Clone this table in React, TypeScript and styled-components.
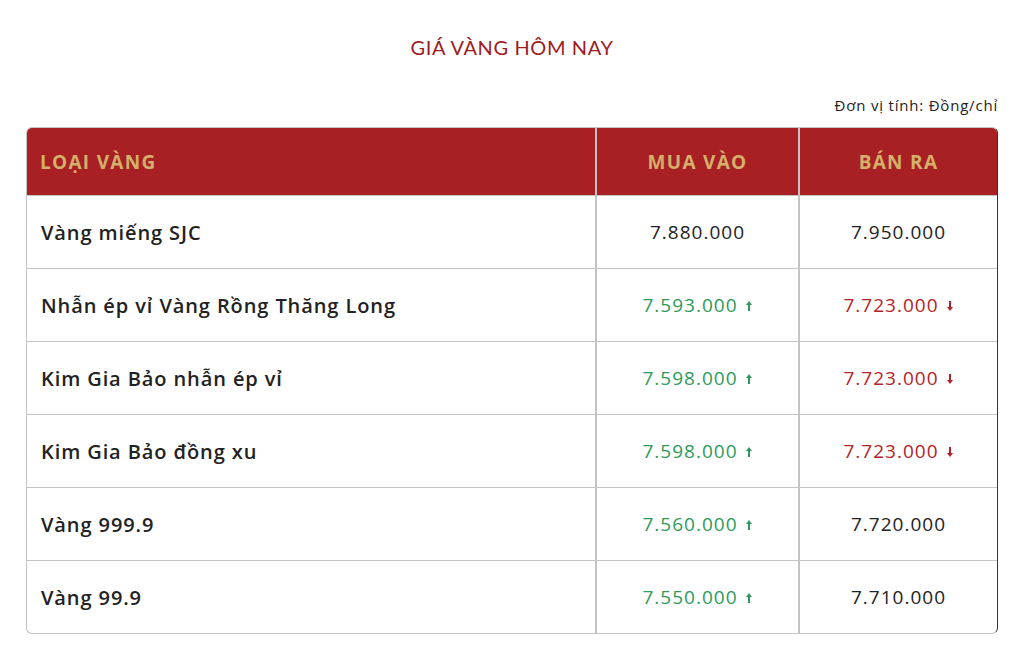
import styled, { createGlobalStyle } from "styled-components";

const GlobalStyle = createGlobalStyle`
  html, body {
    margin: 0;
    padding: 0;
    background: #ffffff;
  }
  body {
    font-family: "Open Sans", "Noto Sans", sans-serif;
    color: #222222;
  }
`;

type Trend = "up" | "down" | "none";

type Row = {
  name: string;
  buy: string;
  buyTrend: Trend;
  sell: string;
  sellTrend: Trend;
};

const rows: Row[] = [
  { name: "Vàng miếng SJC", buy: "7.880.000", buyTrend: "none", sell: "7.950.000", sellTrend: "none" },
  { name: "Nhẫn ép vỉ Vàng Rồng Thăng Long", buy: "7.593.000", buyTrend: "up", sell: "7.723.000", sellTrend: "down" },
  { name: "Kim Gia Bảo nhẫn ép vỉ", buy: "7.598.000", buyTrend: "up", sell: "7.723.000", sellTrend: "down" },
  { name: "Kim Gia Bảo đồng xu", buy: "7.598.000", buyTrend: "up", sell: "7.723.000", sellTrend: "down" },
  { name: "Vàng 999.9", buy: "7.560.000", buyTrend: "up", sell: "7.720.000", sellTrend: "none" },
  { name: "Vàng 99.9", buy: "7.550.000", buyTrend: "up", sell: "7.710.000", sellTrend: "none" },
];

function Arrow({ trend }: { trend: Trend }) {
  if (trend === "none") return null;
  const up = trend === "up";
  return (
    <ArrowIcon width="8" height="12" viewBox="0 0 8 12" $up={up}>
      {up ? (
        <path d="M4 1 L7 5 H5 V11 H3 V5 H1 Z" />
      ) : (
        <path d="M4 11 L7 7 H5 V1 H3 V7 H1 Z" />
      )}
    </ArrowIcon>
  );
}

function App() {
  return (
    <>
      <GlobalStyle />
      <Page>
        <Title>GIÁ VÀNG HÔM NAY</Title>
        <Unit>Đơn vị tính: Đồng/chỉ</Unit>
        <Table>
          <HeadRow>
            <HeadCell $align="left">LOẠI VÀNG</HeadCell>
            <HeadCell>MUA VÀO</HeadCell>
            <HeadCell>BÁN RA</HeadCell>
          </HeadRow>
          {rows.map((r) => (
            <BodyRow key={r.name}>
              <NameCell>{r.name}</NameCell>
              <PriceCell $trend={r.buyTrend}>
                {r.buy}
                <Arrow trend={r.buyTrend} />
              </PriceCell>
              <PriceCell $trend={r.sellTrend}>
                {r.sell}
                <Arrow trend={r.sellTrend} />
              </PriceCell>
            </BodyRow>
          ))}
        </Table>
      </Page>
    </>
  );
}

const Page = styled.div`
  width: 972px;
  margin: 0 auto;
  padding-top: 36px;
`;

const Title = styled.h1`
  margin: 0;
  text-align: center;
  font-family: "Lato", "Open Sans", sans-serif;
  font-weight: 400;
  font-size: 20px;
  letter-spacing: 0.6px;
  color: #9e1b22;
  line-height: 22px;
`;

const Unit = styled.div`
  margin-top: 38px;
  text-align: right;
  font-size: 15px;
  letter-spacing: 0.8px;
  line-height: 18px;
  color: #222222;
`;

const Table = styled.div`
  margin-top: 13px;
  border: 1px solid #c4c4c4;
  border-right-color: #333333;
  border-radius: 6px;
  overflow: hidden;
`;

const Grid = styled.div`
  display: grid;
  grid-template-columns: 568px 203px 1fr;
`;

const HeadRow = styled(Grid)`
  background: #a81f24;
  height: 67px;
`;

const HeadCell = styled.div<{ $align?: "left" | "center" }>`
  display: flex;
  align-items: center;
  justify-content: ${(p) => (p.$align === "left" ? "flex-start" : "center")};
  padding-left: ${(p) => (p.$align === "left" ? "13px" : "0")};
  color: #d4b06a;
  font-weight: 700;
  font-size: 19px;
  letter-spacing: 1.3px;
  & + & {
    border-left: 2px solid #c4c4c4;
  }
`;

const BodyRow = styled(Grid)`
  height: 72px;
  border-top: 1px solid #c4c4c4;
`;

const NameCell = styled.div`
  display: flex;
  align-items: center;
  padding-left: 14px;
  font-weight: 600;
  font-size: 20px;
  letter-spacing: 0.9px;
  color: #222222;
`;

const trendColor = { up: "#2e9a5a", down: "#b3232a", none: "#222222" };

const PriceCell = styled.div<{ $trend: Trend }>`
  display: flex;
  align-items: center;
  justify-content: center;
  gap: 7px;
  border-left: 2px solid #c4c4c4;
  font-size: 19px;
  letter-spacing: 1px;
  color: ${(p) => trendColor[p.$trend]};
`;

const ArrowIcon = styled.svg<{ $up: boolean }>`
  fill: ${(p) => (p.$up ? "#2e9a5a" : "#b3232a")};
  margin-top: 2px;
`;

export default App;
